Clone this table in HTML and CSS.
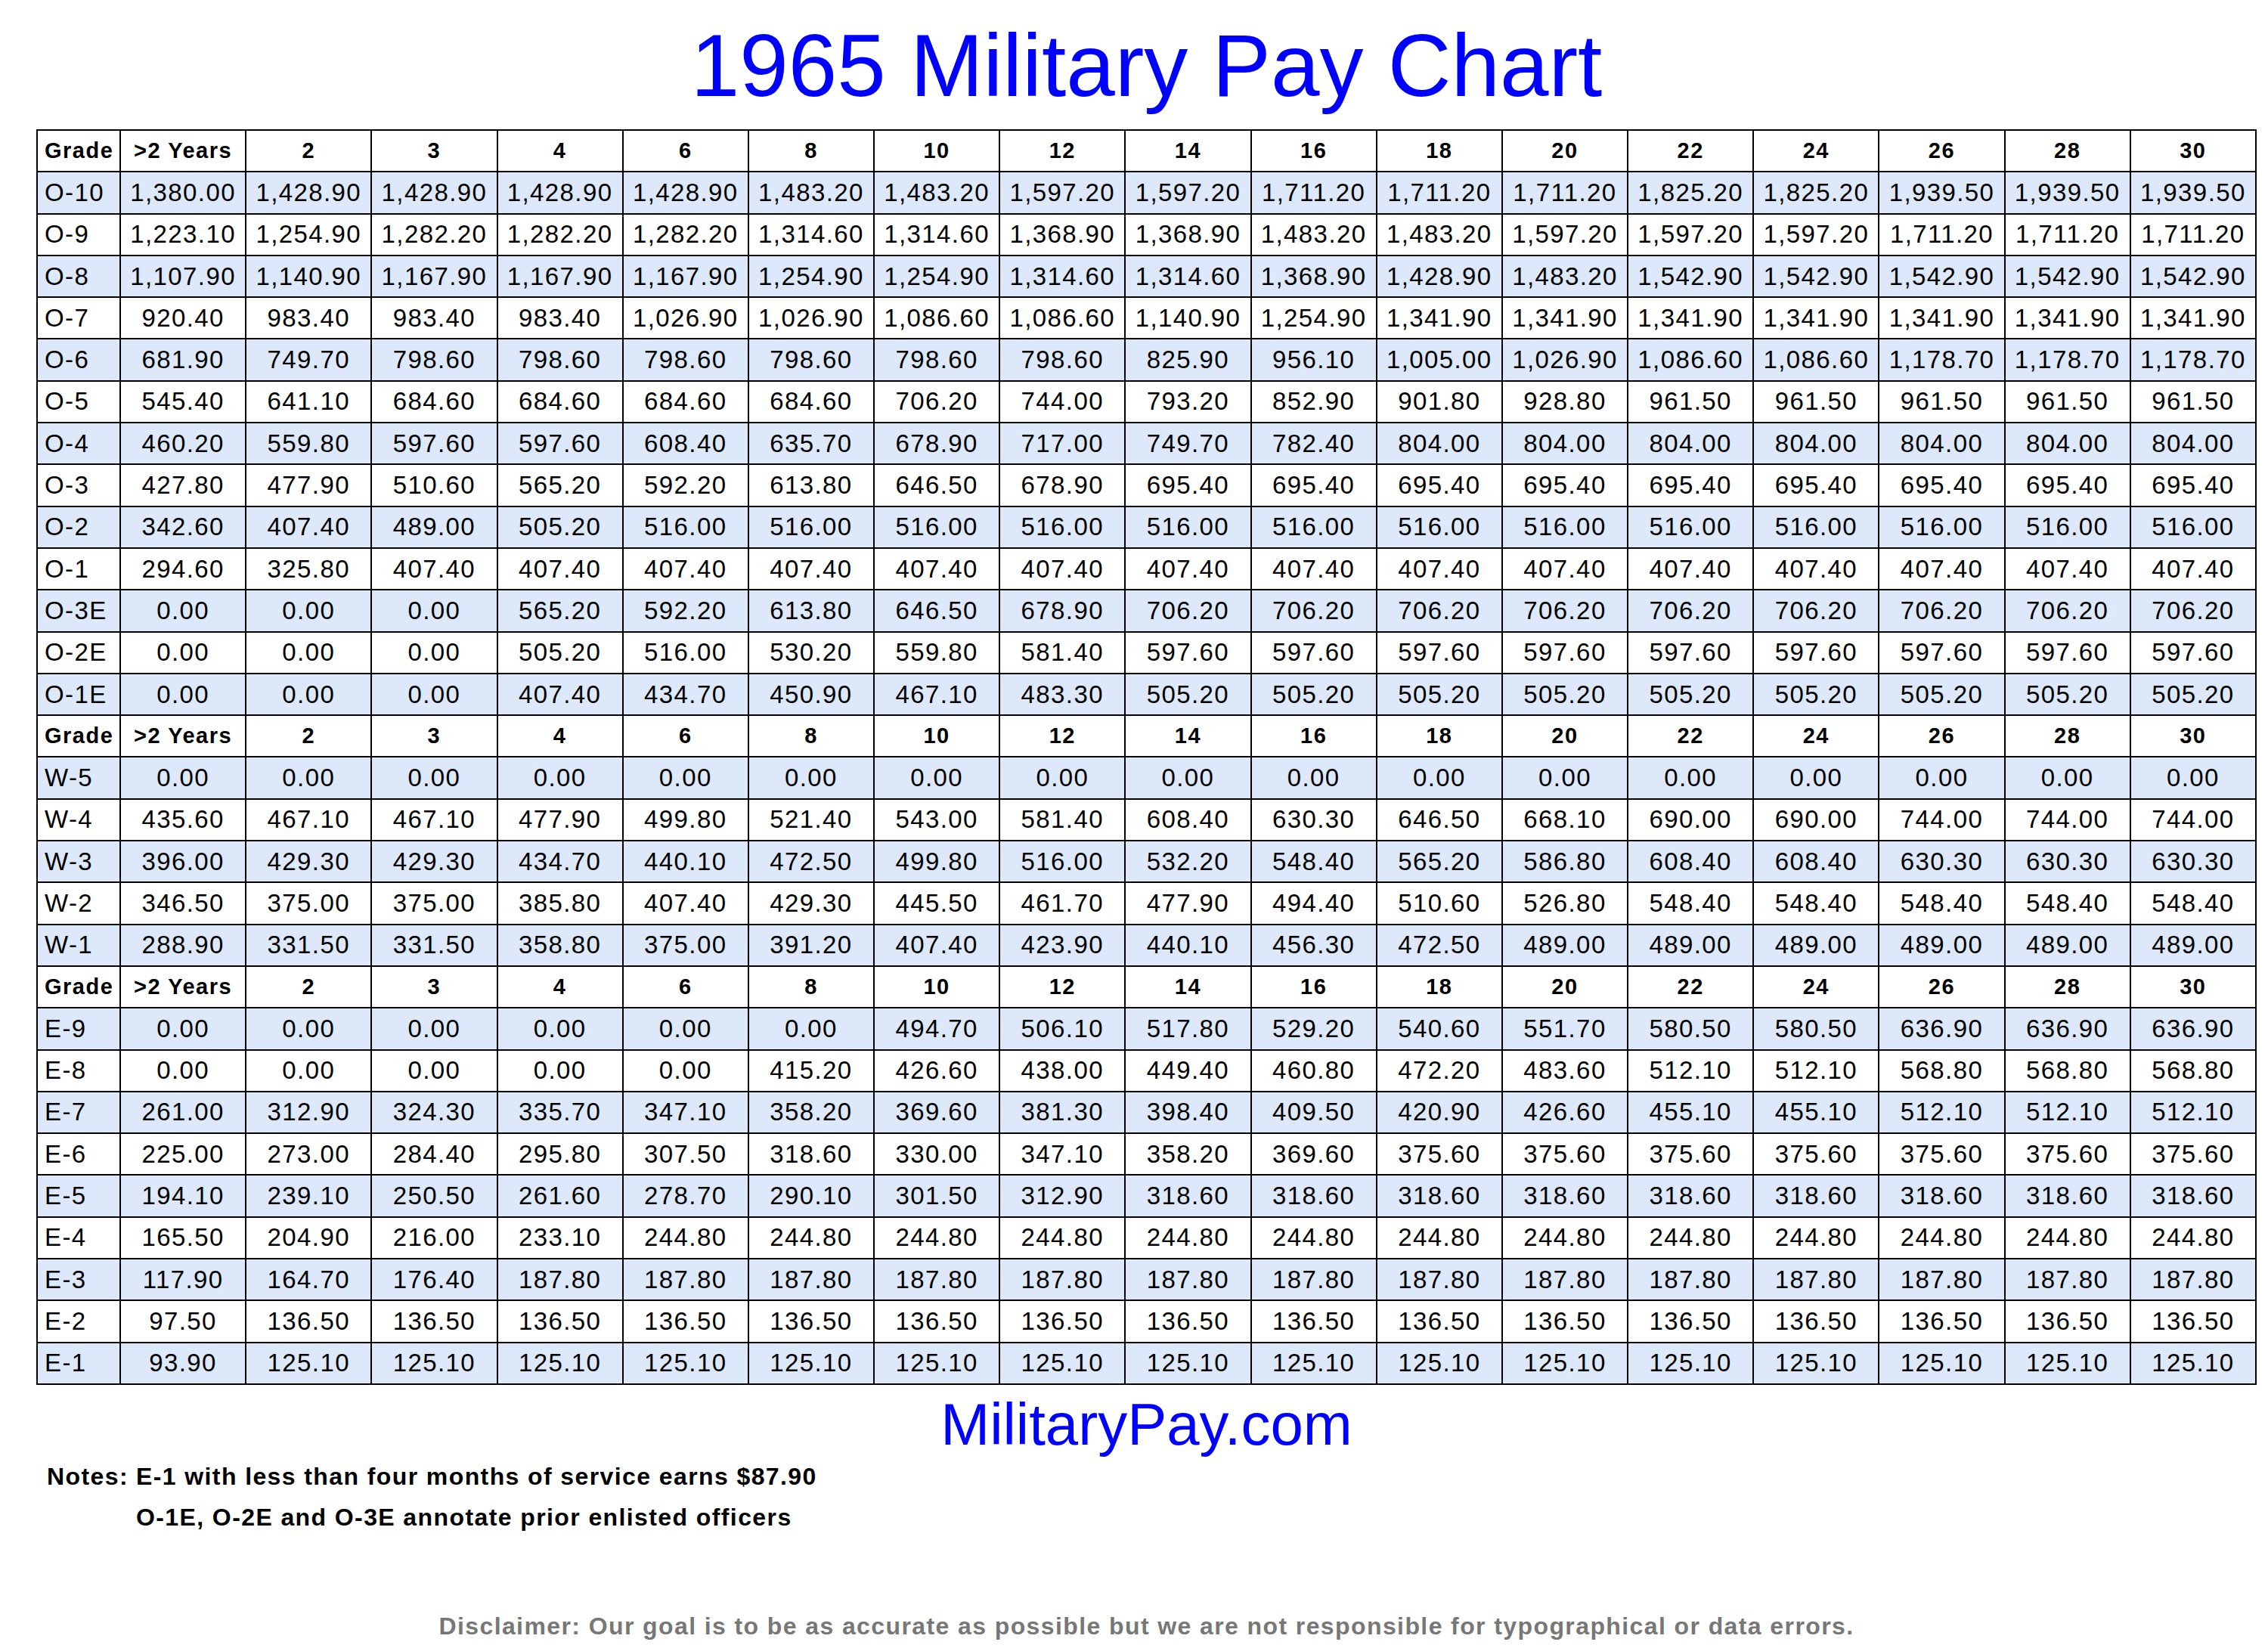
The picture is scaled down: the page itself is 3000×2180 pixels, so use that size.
FILE: index.html
```html
<!DOCTYPE html>
<html lang="en">
<head>
<meta charset="utf-8">
<title>1965 Military Pay Chart</title>
<link rel="stylesheet" href="styles.css">
</head>
<body>
<div class="page">
<h1 class="title">1965 Military Pay Chart</h1>
<table class="pay">
<colgroup><col class="gc"><col span="17"></colgroup>
<tbody>
<tr class="hd"><td class="g">Grade</td><td>&gt;2 Years</td><td>2</td><td>3</td><td>4</td><td>6</td><td>8</td><td>10</td><td>12</td><td>14</td><td>16</td><td>18</td><td>20</td><td>22</td><td>24</td><td>26</td><td>28</td><td>30</td></tr>
<tr class="alt"><td class="g">O-10</td><td>1,380.00</td><td>1,428.90</td><td>1,428.90</td><td>1,428.90</td><td>1,428.90</td><td>1,483.20</td><td>1,483.20</td><td>1,597.20</td><td>1,597.20</td><td>1,711.20</td><td>1,711.20</td><td>1,711.20</td><td>1,825.20</td><td>1,825.20</td><td>1,939.50</td><td>1,939.50</td><td>1,939.50</td></tr>
<tr><td class="g">O-9</td><td>1,223.10</td><td>1,254.90</td><td>1,282.20</td><td>1,282.20</td><td>1,282.20</td><td>1,314.60</td><td>1,314.60</td><td>1,368.90</td><td>1,368.90</td><td>1,483.20</td><td>1,483.20</td><td>1,597.20</td><td>1,597.20</td><td>1,597.20</td><td>1,711.20</td><td>1,711.20</td><td>1,711.20</td></tr>
<tr class="alt"><td class="g">O-8</td><td>1,107.90</td><td>1,140.90</td><td>1,167.90</td><td>1,167.90</td><td>1,167.90</td><td>1,254.90</td><td>1,254.90</td><td>1,314.60</td><td>1,314.60</td><td>1,368.90</td><td>1,428.90</td><td>1,483.20</td><td>1,542.90</td><td>1,542.90</td><td>1,542.90</td><td>1,542.90</td><td>1,542.90</td></tr>
<tr><td class="g">O-7</td><td>920.40</td><td>983.40</td><td>983.40</td><td>983.40</td><td>1,026.90</td><td>1,026.90</td><td>1,086.60</td><td>1,086.60</td><td>1,140.90</td><td>1,254.90</td><td>1,341.90</td><td>1,341.90</td><td>1,341.90</td><td>1,341.90</td><td>1,341.90</td><td>1,341.90</td><td>1,341.90</td></tr>
<tr class="alt"><td class="g">O-6</td><td>681.90</td><td>749.70</td><td>798.60</td><td>798.60</td><td>798.60</td><td>798.60</td><td>798.60</td><td>798.60</td><td>825.90</td><td>956.10</td><td>1,005.00</td><td>1,026.90</td><td>1,086.60</td><td>1,086.60</td><td>1,178.70</td><td>1,178.70</td><td>1,178.70</td></tr>
<tr><td class="g">O-5</td><td>545.40</td><td>641.10</td><td>684.60</td><td>684.60</td><td>684.60</td><td>684.60</td><td>706.20</td><td>744.00</td><td>793.20</td><td>852.90</td><td>901.80</td><td>928.80</td><td>961.50</td><td>961.50</td><td>961.50</td><td>961.50</td><td>961.50</td></tr>
<tr class="alt"><td class="g">O-4</td><td>460.20</td><td>559.80</td><td>597.60</td><td>597.60</td><td>608.40</td><td>635.70</td><td>678.90</td><td>717.00</td><td>749.70</td><td>782.40</td><td>804.00</td><td>804.00</td><td>804.00</td><td>804.00</td><td>804.00</td><td>804.00</td><td>804.00</td></tr>
<tr><td class="g">O-3</td><td>427.80</td><td>477.90</td><td>510.60</td><td>565.20</td><td>592.20</td><td>613.80</td><td>646.50</td><td>678.90</td><td>695.40</td><td>695.40</td><td>695.40</td><td>695.40</td><td>695.40</td><td>695.40</td><td>695.40</td><td>695.40</td><td>695.40</td></tr>
<tr class="alt"><td class="g">O-2</td><td>342.60</td><td>407.40</td><td>489.00</td><td>505.20</td><td>516.00</td><td>516.00</td><td>516.00</td><td>516.00</td><td>516.00</td><td>516.00</td><td>516.00</td><td>516.00</td><td>516.00</td><td>516.00</td><td>516.00</td><td>516.00</td><td>516.00</td></tr>
<tr><td class="g">O-1</td><td>294.60</td><td>325.80</td><td>407.40</td><td>407.40</td><td>407.40</td><td>407.40</td><td>407.40</td><td>407.40</td><td>407.40</td><td>407.40</td><td>407.40</td><td>407.40</td><td>407.40</td><td>407.40</td><td>407.40</td><td>407.40</td><td>407.40</td></tr>
<tr class="alt"><td class="g">O-3E</td><td>0.00</td><td>0.00</td><td>0.00</td><td>565.20</td><td>592.20</td><td>613.80</td><td>646.50</td><td>678.90</td><td>706.20</td><td>706.20</td><td>706.20</td><td>706.20</td><td>706.20</td><td>706.20</td><td>706.20</td><td>706.20</td><td>706.20</td></tr>
<tr><td class="g">O-2E</td><td>0.00</td><td>0.00</td><td>0.00</td><td>505.20</td><td>516.00</td><td>530.20</td><td>559.80</td><td>581.40</td><td>597.60</td><td>597.60</td><td>597.60</td><td>597.60</td><td>597.60</td><td>597.60</td><td>597.60</td><td>597.60</td><td>597.60</td></tr>
<tr class="alt"><td class="g">O-1E</td><td>0.00</td><td>0.00</td><td>0.00</td><td>407.40</td><td>434.70</td><td>450.90</td><td>467.10</td><td>483.30</td><td>505.20</td><td>505.20</td><td>505.20</td><td>505.20</td><td>505.20</td><td>505.20</td><td>505.20</td><td>505.20</td><td>505.20</td></tr>
<tr class="hd"><td class="g">Grade</td><td>&gt;2 Years</td><td>2</td><td>3</td><td>4</td><td>6</td><td>8</td><td>10</td><td>12</td><td>14</td><td>16</td><td>18</td><td>20</td><td>22</td><td>24</td><td>26</td><td>28</td><td>30</td></tr>
<tr class="alt"><td class="g">W-5</td><td>0.00</td><td>0.00</td><td>0.00</td><td>0.00</td><td>0.00</td><td>0.00</td><td>0.00</td><td>0.00</td><td>0.00</td><td>0.00</td><td>0.00</td><td>0.00</td><td>0.00</td><td>0.00</td><td>0.00</td><td>0.00</td><td>0.00</td></tr>
<tr><td class="g">W-4</td><td>435.60</td><td>467.10</td><td>467.10</td><td>477.90</td><td>499.80</td><td>521.40</td><td>543.00</td><td>581.40</td><td>608.40</td><td>630.30</td><td>646.50</td><td>668.10</td><td>690.00</td><td>690.00</td><td>744.00</td><td>744.00</td><td>744.00</td></tr>
<tr class="alt"><td class="g">W-3</td><td>396.00</td><td>429.30</td><td>429.30</td><td>434.70</td><td>440.10</td><td>472.50</td><td>499.80</td><td>516.00</td><td>532.20</td><td>548.40</td><td>565.20</td><td>586.80</td><td>608.40</td><td>608.40</td><td>630.30</td><td>630.30</td><td>630.30</td></tr>
<tr><td class="g">W-2</td><td>346.50</td><td>375.00</td><td>375.00</td><td>385.80</td><td>407.40</td><td>429.30</td><td>445.50</td><td>461.70</td><td>477.90</td><td>494.40</td><td>510.60</td><td>526.80</td><td>548.40</td><td>548.40</td><td>548.40</td><td>548.40</td><td>548.40</td></tr>
<tr class="alt"><td class="g">W-1</td><td>288.90</td><td>331.50</td><td>331.50</td><td>358.80</td><td>375.00</td><td>391.20</td><td>407.40</td><td>423.90</td><td>440.10</td><td>456.30</td><td>472.50</td><td>489.00</td><td>489.00</td><td>489.00</td><td>489.00</td><td>489.00</td><td>489.00</td></tr>
<tr class="hd"><td class="g">Grade</td><td>&gt;2 Years</td><td>2</td><td>3</td><td>4</td><td>6</td><td>8</td><td>10</td><td>12</td><td>14</td><td>16</td><td>18</td><td>20</td><td>22</td><td>24</td><td>26</td><td>28</td><td>30</td></tr>
<tr class="alt"><td class="g">E-9</td><td>0.00</td><td>0.00</td><td>0.00</td><td>0.00</td><td>0.00</td><td>0.00</td><td>494.70</td><td>506.10</td><td>517.80</td><td>529.20</td><td>540.60</td><td>551.70</td><td>580.50</td><td>580.50</td><td>636.90</td><td>636.90</td><td>636.90</td></tr>
<tr><td class="g">E-8</td><td>0.00</td><td>0.00</td><td>0.00</td><td>0.00</td><td>0.00</td><td>415.20</td><td>426.60</td><td>438.00</td><td>449.40</td><td>460.80</td><td>472.20</td><td>483.60</td><td>512.10</td><td>512.10</td><td>568.80</td><td>568.80</td><td>568.80</td></tr>
<tr class="alt"><td class="g">E-7</td><td>261.00</td><td>312.90</td><td>324.30</td><td>335.70</td><td>347.10</td><td>358.20</td><td>369.60</td><td>381.30</td><td>398.40</td><td>409.50</td><td>420.90</td><td>426.60</td><td>455.10</td><td>455.10</td><td>512.10</td><td>512.10</td><td>512.10</td></tr>
<tr><td class="g">E-6</td><td>225.00</td><td>273.00</td><td>284.40</td><td>295.80</td><td>307.50</td><td>318.60</td><td>330.00</td><td>347.10</td><td>358.20</td><td>369.60</td><td>375.60</td><td>375.60</td><td>375.60</td><td>375.60</td><td>375.60</td><td>375.60</td><td>375.60</td></tr>
<tr class="alt"><td class="g">E-5</td><td>194.10</td><td>239.10</td><td>250.50</td><td>261.60</td><td>278.70</td><td>290.10</td><td>301.50</td><td>312.90</td><td>318.60</td><td>318.60</td><td>318.60</td><td>318.60</td><td>318.60</td><td>318.60</td><td>318.60</td><td>318.60</td><td>318.60</td></tr>
<tr><td class="g">E-4</td><td>165.50</td><td>204.90</td><td>216.00</td><td>233.10</td><td>244.80</td><td>244.80</td><td>244.80</td><td>244.80</td><td>244.80</td><td>244.80</td><td>244.80</td><td>244.80</td><td>244.80</td><td>244.80</td><td>244.80</td><td>244.80</td><td>244.80</td></tr>
<tr class="alt"><td class="g">E-3</td><td>117.90</td><td>164.70</td><td>176.40</td><td>187.80</td><td>187.80</td><td>187.80</td><td>187.80</td><td>187.80</td><td>187.80</td><td>187.80</td><td>187.80</td><td>187.80</td><td>187.80</td><td>187.80</td><td>187.80</td><td>187.80</td><td>187.80</td></tr>
<tr><td class="g">E-2</td><td>97.50</td><td>136.50</td><td>136.50</td><td>136.50</td><td>136.50</td><td>136.50</td><td>136.50</td><td>136.50</td><td>136.50</td><td>136.50</td><td>136.50</td><td>136.50</td><td>136.50</td><td>136.50</td><td>136.50</td><td>136.50</td><td>136.50</td></tr>
<tr class="alt"><td class="g">E-1</td><td>93.90</td><td>125.10</td><td>125.10</td><td>125.10</td><td>125.10</td><td>125.10</td><td>125.10</td><td>125.10</td><td>125.10</td><td>125.10</td><td>125.10</td><td>125.10</td><td>125.10</td><td>125.10</td><td>125.10</td><td>125.10</td><td>125.10</td></tr>
</tbody>
</table>
<div class="site">MilitaryPay.com</div>
<div class="notes">
<span class="notes-label">Notes:</span>
<div class="notes-lines">
<div>E-1 with less than four months of service earns $87.90</div>
<div>O-1E, O-2E and O-3E annotate prior enlisted officers</div>
</div>
</div>
<div class="disclaimer">Disclaimer: Our goal is to be as accurate as possible but we are not responsible for typographical or data errors.</div>
</div>
</body>
</html>
```

FILE: styles.css
```css
html, body {
  margin: 0;
  padding: 0;
  background: #ffffff;
}

body {
  font-family: "Liberation Sans", Arial, sans-serif;
  color: #000000;
}

.page {
  width: 2937px;
  margin-left: 48px;
}

.title {
  margin: 21px 0 17px;
  font-size: 116px;
  line-height: 133px;
  font-weight: normal;
  text-align: center;
  color: #0000ff;
}

.pay {
  width: 100%;
  border-collapse: collapse;
  table-layout: fixed;
}

.pay col.gc {
  width: 110px;
}

.pay tr {
  height: 55.3px;
}

.pay td {
  border: 2px solid #000000;
  padding: 0;
  text-align: center;
  vertical-align: middle;
  font-size: 33px;
  letter-spacing: 1.4px;
  white-space: nowrap;
}

.pay td.g {
  text-align: left;
  padding-left: 9px;
}

.pay tr.hd td {
  font-weight: bold;
  font-size: 29px;
  letter-spacing: 1.5px;
}

.pay tr.alt td {
  background: #dde8fb;
}

.site {
  margin-top: 12px;
  font-size: 78px;
  line-height: 80px;
  text-align: center;
  color: #0000ff;
}

.notes {
  display: flex;
  gap: 10px;
  margin-top: 2px;
  padding-left: 14px;
  font-weight: bold;
  font-size: 32px;
  line-height: 54px;
  letter-spacing: 1.4px;
}

.disclaimer {
  margin-top: 90px;
  text-align: center;
  font-weight: bold;
  font-size: 32px;
  line-height: 54px;
  letter-spacing: 1.4px;
  color: #777777;
}
```
